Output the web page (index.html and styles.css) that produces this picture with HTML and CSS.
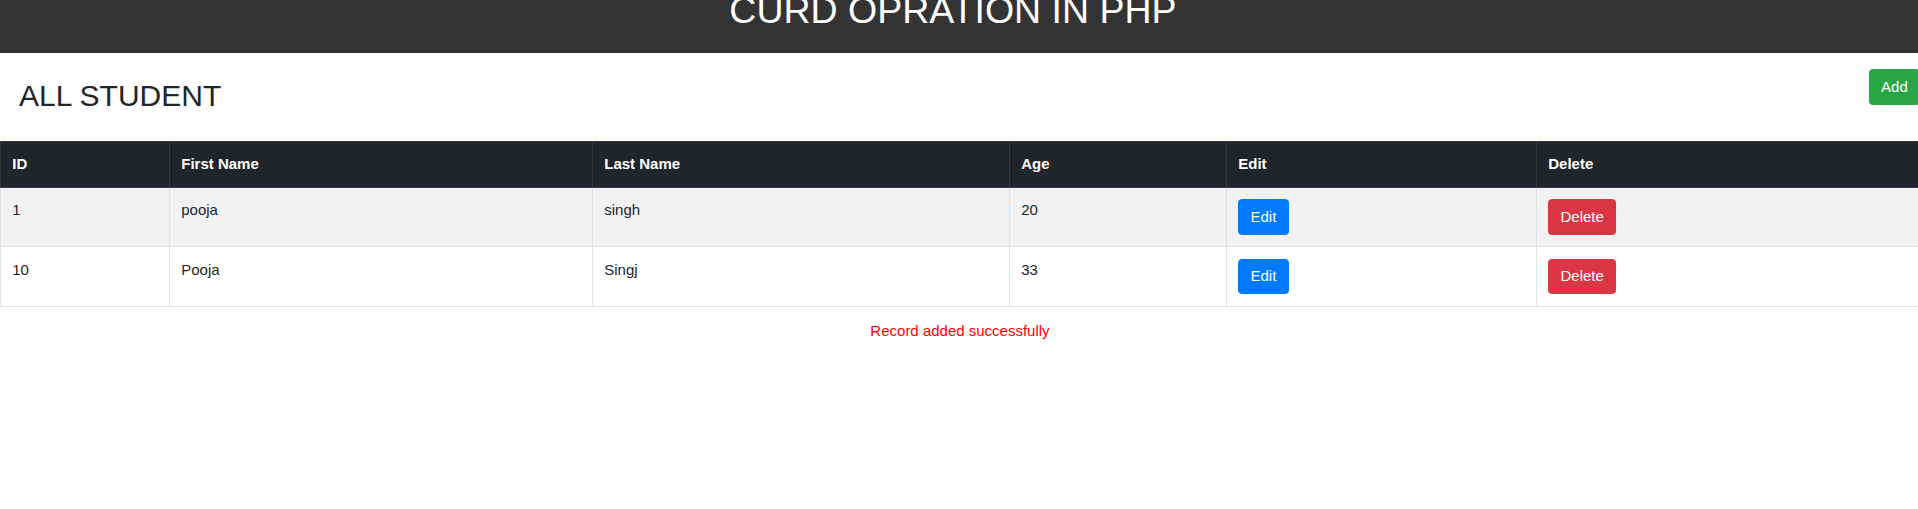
FILE: index.html
```html
<!DOCTYPE html>
<html lang="en">
<head>
<meta charset="utf-8">
<title>CURD OPRATION IN PHP</title>
<link rel="stylesheet" href="styles.css">
</head>
<body>
<div class="page">
  <header class="topbar">
    <h1 class="title">CURD OPRATION IN PHP</h1>
  </header>
  <div class="toolbar">
    <h2 class="heading">ALL STUDENT</h2>
    <a class="btn btn-success" href="#">Add</a>
  </div>
  <table class="grid">
    <thead>
      <tr>
        <th class="c-id">ID</th>
        <th class="c-first">First Name</th>
        <th class="c-last">Last Name</th>
        <th class="c-age">Age</th>
        <th class="c-edit">Edit</th>
        <th class="c-del">Delete</th>
      </tr>
    </thead>
    <tbody>
      <tr class="odd">
        <td>1</td>
        <td>pooja</td>
        <td>singh</td>
        <td>20</td>
        <td><a class="btn btn-primary" href="#">Edit</a></td>
        <td><a class="btn btn-danger" href="#">Delete</a></td>
      </tr>
      <tr>
        <td>10</td>
        <td>Pooja</td>
        <td>Singj</td>
        <td>33</td>
        <td><a class="btn btn-primary" href="#">Edit</a></td>
        <td><a class="btn btn-danger" href="#">Delete</a></td>
      </tr>
    </tbody>
  </table>
  <p class="message">Record added successfully</p>
</div>
</body>
</html>
```
FILE: styles.css
```css
html {
  font-size: 15px;
}
html, body {
  margin: 0;
  padding: 0;
  overflow: hidden;
  background: #fff;
}
body {
  font-family: "Liberation Sans", Arial, sans-serif;
  font-size: 15px;
  line-height: 1.5;
  color: #212529;
}
.page {
  width: 1920px;
}
.topbar {
  height: 53px;
  background: #333333;
  overflow: hidden;
  padding-right: 14px;
}
.title {
  margin: -12.5px 0 0;
  font-size: 37.5px;
  font-weight: 500;
  line-height: 1.2;
  color: #fff;
  text-align: center;
}
.toolbar {
  display: flex;
  justify-content: space-between;
  align-items: flex-start;
  box-sizing: border-box;
  height: 88px;
  padding: 16px 0 0 19px;
}
.heading {
  margin: 9px 0 0;
  font-size: 30px;
  font-weight: 500;
  line-height: 1.2;
  color: #212529;
}
.btn {
  display: inline-block;
  padding: 5.625px 11.25px;
  border: 1px solid transparent;
  border-radius: 3.75px;
  font-size: 15px;
  line-height: 1.5;
  color: #fff;
  text-decoration: none;
  white-space: nowrap;
}
.btn-success { background: #28a745; border-color: #28a745; }
.btn-primary { background: #007bff; border-color: #007bff; }
.btn-danger { background: #dc3545; border-color: #dc3545; }
.grid {
  width: 1920px;
  table-layout: fixed;
  border-collapse: collapse;
  border: 1px solid #dee2e6;
}
.grid th,
.grid td {
  box-sizing: border-box;
  padding: 11.25px;
  text-align: left;
  vertical-align: top;
  border: 1px solid #dee2e6;
}
.grid th {
  vertical-align: bottom;
  font-weight: 700;
  color: #fff;
  background: #212529;
  border-color: #32383e;
}
.c-id { width: 169px; }
.c-first { width: 423px; }
.c-last { width: 417px; }
.c-age { width: 217px; }
.c-edit { width: 310px; }
.c-del { width: 384px; }
.grid .odd td {
  background: #f2f2f2;
}
.message {
  margin: 13px 0 0;
  text-align: center;
  color: #ff0000;
}
```
